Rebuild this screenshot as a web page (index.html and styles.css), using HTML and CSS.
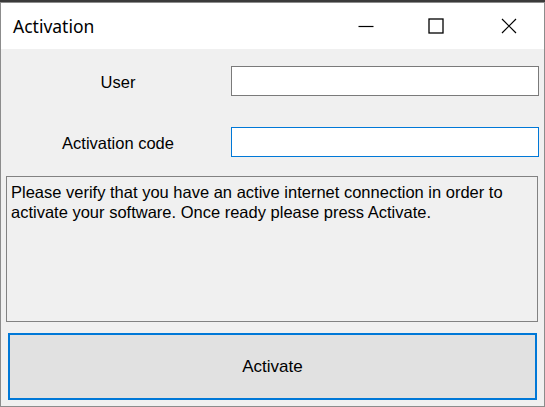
FILE: index.html
```html
<!DOCTYPE html>
<html>
<head>
    <title>Activation</title>
    <link rel="stylesheet" href="styles.css">
</head>
<body>

<div class="window">
    <div class="title-bar">
        <span class="title-text">Activation</span>
        <div class="caption-buttons">
            <div class="caption-btn">
                <svg width="16" height="16" viewBox="0 0 16 16"><path d="M0.5 8.5H15.5" stroke="#000" stroke-width="1.2" fill="none"/></svg>
            </div>
            <div class="caption-btn">
                <svg width="16" height="16" viewBox="0 0 16 16"><rect x="1" y="1" width="14" height="14" stroke="#000" stroke-width="1.3" fill="none"/></svg>
            </div>
            <div class="caption-btn">
                <svg width="16" height="16" viewBox="0 0 16 16"><path d="M1 1L15 15M15 1L1 15" stroke="#000" stroke-width="1.2" fill="none"/></svg>
            </div>
        </div>
    </div>

    <div class="client">
        <div class="activation-form">
            <label class="form-label" for="userName">User</label>
            <input class="form-input" id="userName" type="text">
            <label class="form-label" for="activationCode">Activation code</label>
            <input class="form-input form-input-focused" id="activationCode" type="text">
        </div>

        <div class="info-box">Please verify that you have an active internet connection in order to activate your software. Once ready please press Activate.</div>

        <button class="activate-btn">Activate</button>
    </div>
</div>

</body>
</html>
```

FILE: styles.css
```css
html, body {
    margin: 0;
    padding: 0;
    background: #3a3a3a;
}

.window {
    margin-top: 2px;
    width: 543px;
    height: 403px;
    border: 1px solid #8c8c8c;
    background: #f0f0f0;
    display: flex;
    flex-direction: column;
    font-family: "Liberation Sans", Arial, sans-serif;
    color: #000;
}

.title-bar {
    height: 46px;
    background: #fff;
    display: flex;
    align-items: center;
    justify-content: space-between;
}

.title-text {
    font-family: "Noto Sans", "Open Sans", sans-serif;
    font-size: 17.5px;
    padding-left: 12px;
    padding-bottom: 1px;
}

.caption-buttons {
    display: flex;
    height: 100%;
}

.caption-btn {
    width: 70px;
    display: flex;
    align-items: center;
    justify-content: center;
}
.caption-btn:nth-child(2) {
    padding-right: 3px;
}
.caption-btn svg {
    display: block;
}

.client {
    flex: 1;
    display: flex;
    flex-direction: column;
    padding: 17px 6px 0 5px;
}

.activation-form {
    display: grid;
    grid-template-columns: 224px 1fr;
    grid-template-rows: 30px 30px;
    row-gap: 31px;
    column-gap: 1px;
    align-items: center;
}

.form-label {
    text-align: center;
    font-size: 16.5px;
    padding-top: 2px;
}

.form-input {
    box-sizing: border-box;
    height: 30px;
    width: 308px;
    margin: 0;
    border: 1px solid #7a7a7a;
    background: #fff;
    outline: none;
    font-size: 15px;
}
.form-input-focused {
    border-color: #0078d7;
}

.info-box {
    box-sizing: border-box;
    margin-top: 19px;
    height: 146px;
    border: 1px solid #828282;
    padding: 5px 4px;
    font-size: 16.5px;
    line-height: 20px;
    background: #f0f0f0;
}

.activate-btn {
    box-sizing: border-box;
    margin: 11px 1px 0 2px;
    height: 67px;
    border: 2px solid #0078d7;
    background: #e1e1e1;
    font-family: "Liberation Sans", Arial, sans-serif;
    font-size: 17px;
    color: #000;
    padding: 0;
}
```
